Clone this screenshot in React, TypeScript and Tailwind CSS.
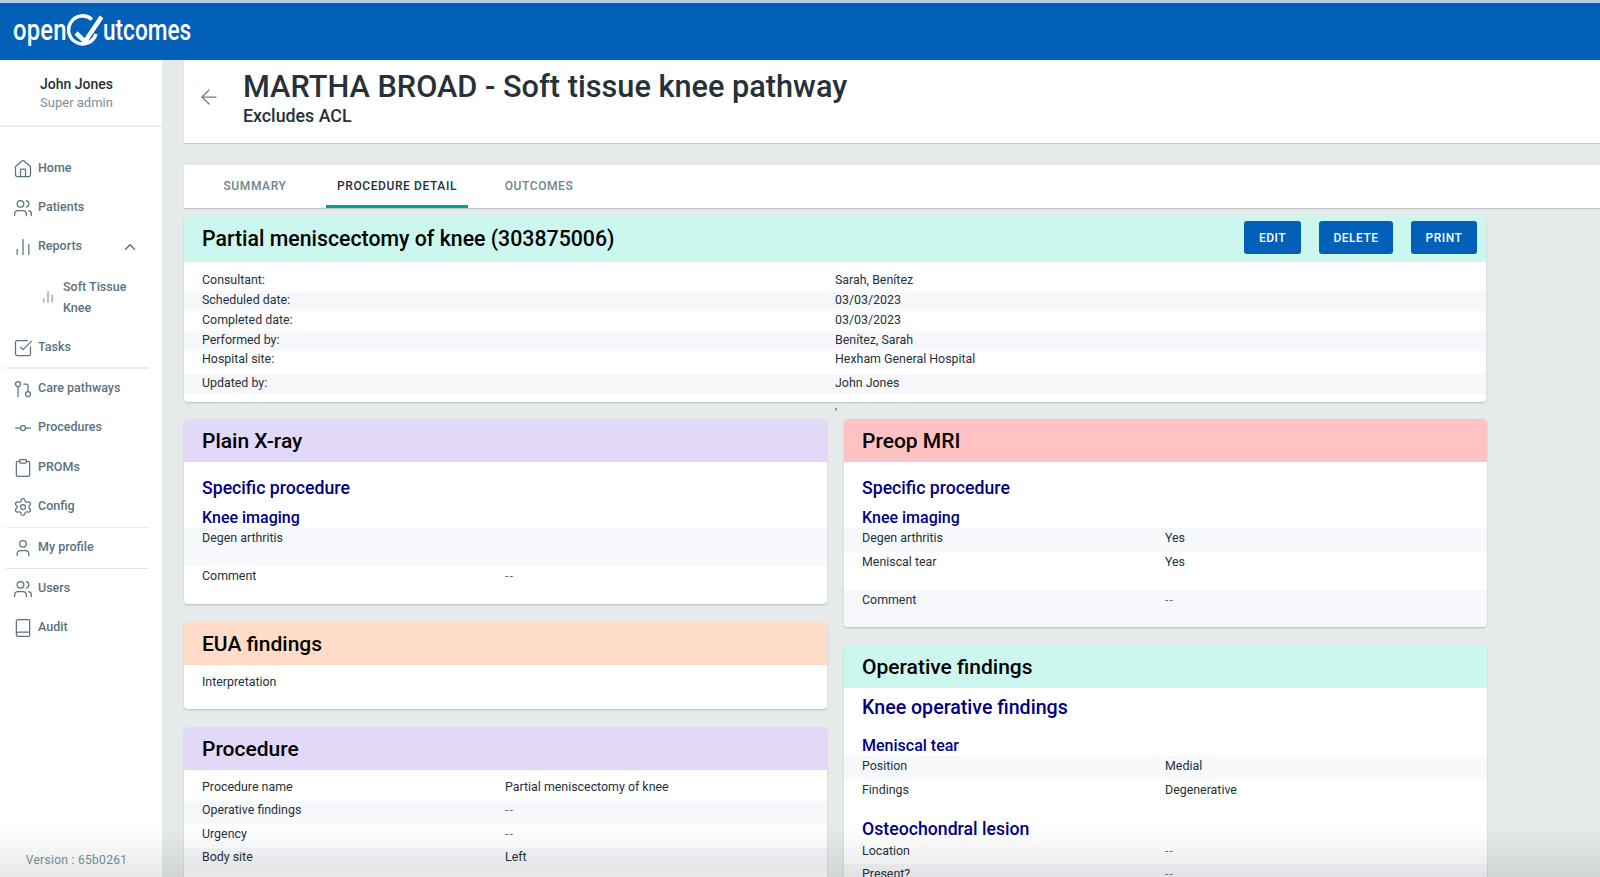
import { ArrowLeft, Book, ChartNoAxesColumn, ChevronUp, Clipboard, GitCommitHorizontal, GitPullRequest, Home, Settings, SquareCheckBig, User, Users } from "lucide-react";
import type { ReactNode } from "react";

const Logo = () => (
    <div className="flex items-center text-white text-[29px] font-medium leading-none">
        <span className="w-[54px] whitespace-nowrap origin-left scale-x-[0.82] tracking-[0.3px]">open</span>
        <svg width="36" height="34" viewBox="0 0 36 34" fill="none" stroke="white">
            <path d="M25 6.5 A14 14 0 1 0 29 21" strokeWidth="3.5" />
            <path d="M9 20 L18 28.6 L34.6 3.7" strokeWidth="4.5" />
        </svg>
        <span className="w-[88px] whitespace-nowrap origin-left scale-x-[0.78]">utcomes</span>
    </div>
);

const NavItem = ({ icon, label, right, className = "" }: { icon: ReactNode; label: string; right?: ReactNode; className?: string }) => (
    <div className={`h-[39px] flex items-center pl-[13px] pr-[23px] text-[#5b727d] text-[12.5px] font-medium ${className}`}>
        <span className="w-[25px] shrink-0">{icon}</span>
        <span className="flex-1">{label}</span>
        {right}
    </div>
);

const Sidebar = () => (
    <aside className="w-[162px] shrink-0 bg-white flex flex-col relative">
        <div className="h-[67px] pr-[9px] border-b-2 border-[#eceff1] flex flex-col items-center justify-center">
            <div className="text-[14px] font-medium text-[#263238] leading-[20px]">John Jones</div>
            <div className="text-[13px] text-[#78909c] leading-[17px]">Super admin</div>
        </div>
        <nav className="pt-[22px]">
            <NavItem icon={<Home size={20} strokeWidth={1.5} />} label="Home" />
            <NavItem icon={<Users size={20} strokeWidth={1.5} />} label="Patients" />
            <NavItem icon={<ChartNoAxesColumn size={20} strokeWidth={1.5} />} label="Reports" right={<ChevronUp size={18} strokeWidth={2} />} />
            <div className="h-[62px] pb-[1px] flex items-center pl-[41px] text-[#5b727d] text-[12.5px] font-medium leading-[21px]">
                <ChartNoAxesColumn size={14} strokeWidth={1.5} className="mr-[8px] shrink-0" />
                <span>Soft Tissue<br />Knee</span>
            </div>
            <NavItem icon={<SquareCheckBig size={20} strokeWidth={1.5} />} label="Tasks" />
            <div className="ml-[6px] mr-[14px] border-t-2 border-[#eceff1]" />
            <NavItem icon={<GitPullRequest size={20} strokeWidth={1.5} />} label="Care pathways" />
            <NavItem icon={<GitCommitHorizontal size={20} strokeWidth={1.5} />} label="Procedures" />
            <NavItem icon={<Clipboard size={20} strokeWidth={1.5} />} label="PROMs" className="mt-[1px]" />
            <NavItem icon={<Settings size={20} strokeWidth={1.5} />} label="Config" />
            <div className="mt-[1px] ml-[6px] mr-[14px] border-t border-[#eceff1]" />
            <NavItem icon={<User size={20} strokeWidth={1.5} />} label="My profile" />
            <div className="mt-[1px] ml-[6px] mr-[14px] border-t border-[#e0e4e6]" />
            <NavItem icon={<Users size={20} strokeWidth={1.5} />} label="Users" />
            <NavItem icon={<Book size={20} strokeWidth={1.5} />} label="Audit" />
        </nav>
        <div className="mt-auto pb-[8px] pr-[9px] text-center text-[12px] text-[#78909c] tracking-[0.3px]">Version : 65b0261</div>
    </aside>
);

const Row = ({ label, value, alt, h = "h-[24px]" }: { label: string; value?: string; alt?: boolean; h?: string }) => (
    <div className={`flex px-[18px] pt-[0.5px] text-[12.4px] text-[#263238] leading-[17px] ${h} ${alt ? "bg-[#f7f8fc]" : ""}`}>
        <span className="w-[303px] shrink-0">{label}</span>
        <span className={value === "--" ? "tracking-[1px] text-[#6b7275]" : ""}>{value}</span>
    </div>
);

const InfoRow = ({ label, value, alt, h = "h-[20px] pb-[1px]" }: { label: string; value: string; alt?: boolean; h?: string }) => (
    <div className={`flex items-center px-[18px] text-[12.4px] text-[#263238] ${h} ${alt ? "bg-[#f7f8fc]" : ""}`}>
        <span className="w-[633px] shrink-0">{label}</span>
        <span>{value}</span>
    </div>
);

const Card = ({ title, color, children }: { title: string; color: string; children: ReactNode }) => (
    <section className="bg-white rounded-[4px] shadow-[0_1px_2px_rgba(0,0,0,0.2)] overflow-hidden">
        <h2 className={`h-[43px] pt-[2px] flex items-center px-[18px] text-[21px] font-medium text-black ${color}`}>{title}</h2>
        {children}
    </section>
);

const Heading = ({ children }: { children: ReactNode }) => (
    <h3 className="px-[18px] text-[17.7px] font-medium text-[#000080] leading-[22px]">{children}</h3>
);

const SubHeading = ({ children }: { children: ReactNode }) => (
    <h3 className="px-[18px] text-[16px] font-medium text-[#000080] leading-[21px]">{children}</h3>
);

const Btn = ({ label, w }: { label: string; w: string }) => (
    <button className={`h-[33px] ${w} rounded-[3px] bg-[#0360b8] text-white text-[12px] font-medium tracking-[0.5px]`}>{label}</button>
);

const App = () => (
    <div className="h-[877px] overflow-hidden flex flex-col bg-[#e5eaea] font-['Roboto',sans-serif] relative">
        <header className="h-[60px] shrink-0 bg-[#0360b8] border-t-[3px] border-[#b4cfe6] flex items-center pl-[13px] pb-[3px]">
            <Logo />
        </header>
        <div className="flex flex-1 min-h-0">
            <Sidebar />
            <main className="flex-1 min-w-0 pl-[22px]">
                <div className="h-[83px] pb-[8px] bg-white flex items-center shadow-[0_1px_1px_rgba(0,0,0,0.15)]">
                    <ArrowLeft size={24} strokeWidth={1.25} className="ml-[13px] mr-[22px] mb-[1px] text-[#607d8b]" />
                    <div>
                        <h1 className="text-[30.7px] font-medium text-[#263238] leading-[36px]">MARTHA BROAD - Soft tissue knee pathway</h1>
                        <div className="text-[17.8px] font-medium text-[#263238] leading-[22px]">Excludes ACL</div>
                    </div>
                </div>
                <div className="mt-[22px] h-[43px] bg-white flex text-[12px] font-medium tracking-[0.6px] shadow-[0_1px_1px_rgba(0,0,0,0.15)]">
                    <div className="w-[142px] pb-[1px] flex items-center justify-center text-[#6d868f]">SUMMARY</div>
                    <div className="w-[142px] pb-[1px] flex items-center justify-center text-[#263238] shadow-[inset_0_-3px_0_#00a09b]">PROCEDURE DETAIL</div>
                    <div className="w-[142px] pb-[1px] flex items-center justify-center text-[#6d868f] ml-[-4px] pl-[8px]">OUTCOMES</div>
                </div>
                <section className="mt-[7px] w-[1302px] bg-white rounded-[4px] shadow-[0_1px_2px_rgba(0,0,0,0.2)] overflow-hidden">
                    <div className="h-[47px] bg-[#ccf7ee] flex items-center pl-[18px] pr-[9px]">
                        <h2 className="flex-1 text-[21.3px] font-medium text-black">Partial meniscectomy of knee (303875006)</h2>
                        <div className="flex gap-[18px] mb-[2px]">
                            <Btn label="EDIT" w="w-[57px]" />
                            <Btn label="DELETE" w="w-[74px]" />
                            <Btn label="PRINT" w="w-[66px]" />
                        </div>
                    </div>
                    <div className="pb-[8px]">
                        <InfoRow label="Consultant:" value="Sarah, Benítez" h="h-[29px] pt-[8px]" />
                        <InfoRow label="Scheduled date:" value="03/03/2023" alt h="h-[20px] pb-[2px]" />
                        <InfoRow label="Completed date:" value="03/03/2023" />
                        <InfoRow label="Performed by:" value="Benítez, Sarah" alt />
                        <InfoRow label="Hospital site:" value="Hexham General Hospital" h="h-[23px] pb-[6px]" />
                        <InfoRow label="Updated by:" value="John Jones" alt />
                    </div>
                </section>
                <div className="h-[17px] pl-[651px] text-[10px] leading-[8px] text-[#263238]">,</div>
                <div className="flex gap-[17px] w-[1303px]">
                    <div className="w-[643px] flex flex-col gap-[18px]">
                        <Card title="Plain X-ray" color="bg-[#e2d9f9]">
                            <div className="pt-[15px]">
                                <Heading>Specific procedure</Heading>
                                <div className="mt-[8px]"><SubHeading>Knee imaging</SubHeading></div>
                                <Row label="Degen arthritis" alt h="h-[38px]" />
                                <Row label="Comment" value="--" h="h-[38px]" />
                            </div>
                        </Card>
                        <Card title="EUA findings" color="bg-[#ffdcc7]">
                            <div className="h-[44px] pt-[7px]">
                                <Row label="Interpretation" />
                            </div>
                        </Card>
                        <Card title="Procedure" color="bg-[#e2d9f9]">
                            <div className="pt-[7px] pb-[20px]">
                                <Row label="Procedure name" value="Partial meniscectomy of knee" h="h-[23.5px]" />
                                <Row label="Operative findings" value="--" alt h="h-[23.5px]" />
                                <Row label="Urgency" value="--" h="h-[23.5px]" />
                                <Row label="Body site" value="Left" alt h="h-[23.5px]" />
                            </div>
                        </Card>
                    </div>
                    <div className="w-[643px] flex flex-col gap-[18px]">
                        <Card title="Preop MRI" color="bg-[#ffc2c2]">
                            <div className="pt-[15px]">
                                <Heading>Specific procedure</Heading>
                                <div className="mt-[8px]"><SubHeading>Knee imaging</SubHeading></div>
                                <Row label="Degen arthritis" value="Yes" alt />
                                <Row label="Meniscal tear" value="Yes" h="h-[38px]" />
                                <Row label="Comment" value="--" alt h="h-[37px]" />
                            </div>
                        </Card>
                        <Card title="Operative findings" color="bg-[#ccf7ee]">
                            <div className="pt-[8px] pb-[20px]">
                                <h3 className="px-[18px] text-[19.6px] font-medium text-[#000080] leading-[24px]">Knee operative findings</h3>
                                <div className="mt-[15px]"><SubHeading>Meniscal tear</SubHeading></div>
                                <Row label="Position" value="Medial" alt />
                                <Row label="Findings" value="Degenerative" h="h-[38px]" />
                                <div className="pb-[1px]"><Heading>Osteochondral lesion</Heading></div>
                                <Row label="Location" value="--" h="h-[23px]" />
                                <Row label="Present?" value="--" alt />
                            </div>
                        </Card>
                    </div>
                </div>
            </main>
        </div>
        {/* soft shade along the bottom edge */}
        <div className="absolute bottom-0 left-0 right-0 h-[50px] bg-gradient-to-b from-transparent to-[rgba(0,0,0,0.09)] pointer-events-none" />
    </div>
);

export default App;
